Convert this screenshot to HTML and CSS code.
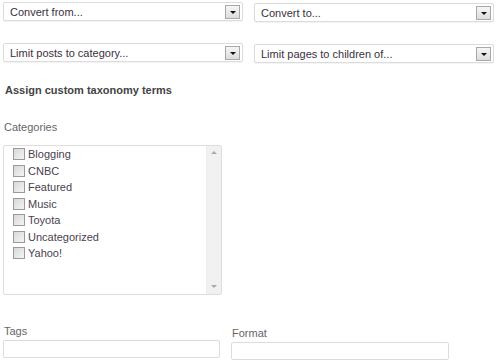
FILE: index.html
```html
<!DOCTYPE html>
<html lang="en">
<head>
    <meta charset="UTF-8">
    <title>Convert Post Types</title>
    <link rel="stylesheet" href="styles.css">
</head>
<body>
    <div class="options">
        <div class="select-row">
            <div class="fake-select"><span>Convert from...</span><i class="arrow"></i></div>
            <div class="fake-select second"><span>Convert to...</span><i class="arrow"></i></div>
        </div>
        <div class="select-row row-two">
            <div class="fake-select"><span>Limit posts to category...</span><i class="arrow"></i></div>
            <div class="fake-select second"><span>Limit pages to children of...</span><i class="arrow"></i></div>
        </div>

        <h4 class="section-title">Assign custom taxonomy terms</h4>

        <p class="field-label cat-label">Categories</p>
        <div class="checklist">
            <ul class="checklist-items">
                <li><span class="box"></span>Blogging</li>
                <li><span class="box"></span>CNBC</li>
                <li><span class="box"></span>Featured</li>
                <li><span class="box"></span>Music</li>
                <li><span class="box"></span>Toyota</li>
                <li><span class="box"></span>Uncategorized</li>
                <li><span class="box"></span>Yahoo!</li>
            </ul>
            <div class="scrollbar">
                <i class="scroll-up"></i>
                <i class="scroll-down"></i>
            </div>
        </div>

        <div class="text-fields">
            <div class="text-field">
                <p class="field-label">Tags</p>
                <div class="text-input"></div>
            </div>
            <div class="text-field format">
                <p class="field-label">Format</p>
                <div class="text-input"></div>
            </div>
        </div>
    </div>
</body>
</html>
```

FILE: styles.css
```css
* {
    box-sizing: border-box;
}

body {
    margin: 0;
    background-color: #fff;
    color: #333;
    font-family: 'Liberation Sans', Arial, sans-serif;
    font-size: 11px;
    overflow: hidden;
}

.options {
    padding: 2px 0 0 3px;
}

.select-row {
    display: flex;
    gap: 11px;
}

.row-two {
    margin-top: 21px;
}

.fake-select {
    display: flex;
    align-items: center;
    justify-content: space-between;
    width: 240px;
    height: 19px;
    padding: 0 2px 0 6px;
    border: 1px solid #dcdcdc;
    border-radius: 2px;
    box-shadow: 0 1px 1px rgba(0, 0, 0, 0.05);
    background-color: #fff;
    color: #3a3040;
    font-size: 11px;
}

.fake-select.second {
    margin-top: 1px;
}

.arrow {
    position: relative;
    width: 15px;
    height: 14px;
    border: 1px solid #a8a8a8;
    background: linear-gradient(#f6f6f6, #dcdcdc);
}

.arrow::after {
    content: "";
    position: absolute;
    left: 4px;
    top: 5px;
    border-left: 3px solid transparent;
    border-right: 3px solid transparent;
    border-top: 3px solid #111;
}

.section-title {
    margin: 21px 0 0 2px;
    font-size: 11px;
    font-weight: bold;
    color: #444;
    line-height: 13px;
}

.field-label {
    margin: 0 0 0 1px;
    color: #666;
    font-size: 11px;
    line-height: 13px;
}

.cat-label {
    margin-top: 24px;
}

.checklist {
    display: flex;
    width: 219px;
    height: 150px;
    margin-top: 11px;
    border: 1px solid #dedede;
    border-radius: 2px;
}

.checklist-items {
    flex: 1;
    margin: 0;
    padding: 0 0 0 9px;
    list-style: none;
}

.checklist-items li {
    display: flex;
    align-items: center;
    height: 16.5px;
    color: #4a4250;
    font-size: 11px;
}

.box {
    width: 12px;
    height: 12px;
    margin-right: 3px;
    border: 1px solid #9a9a9a;
    background: linear-gradient(135deg, #d8d8d8, #f4f4f4);
}

.scrollbar {
    position: relative;
    width: 15px;
    background-color: #f1f1f1;
    border-left: 1px solid #ececec;
}

.scroll-up,
.scroll-down {
    position: absolute;
    left: 4px;
    border-left: 3px solid transparent;
    border-right: 3px solid transparent;
}

.scroll-up {
    top: 5px;
    border-bottom: 3px solid #aaa;
}

.scroll-down {
    bottom: 6px;
    border-top: 3px solid #aaa;
}

.text-fields {
    display: flex;
    gap: 11px;
    margin-top: 30px;
}

.text-field .field-label {
    margin-bottom: 2px;
}

.text-field.format {
    margin-top: 2px;
}

.text-input {
    width: 217px;
    height: 18px;
    border: 1px solid #dcdcdc;
    border-radius: 2px;
    background-color: #fff;
}

.format .text-input {
    width: 218px;
}
```
